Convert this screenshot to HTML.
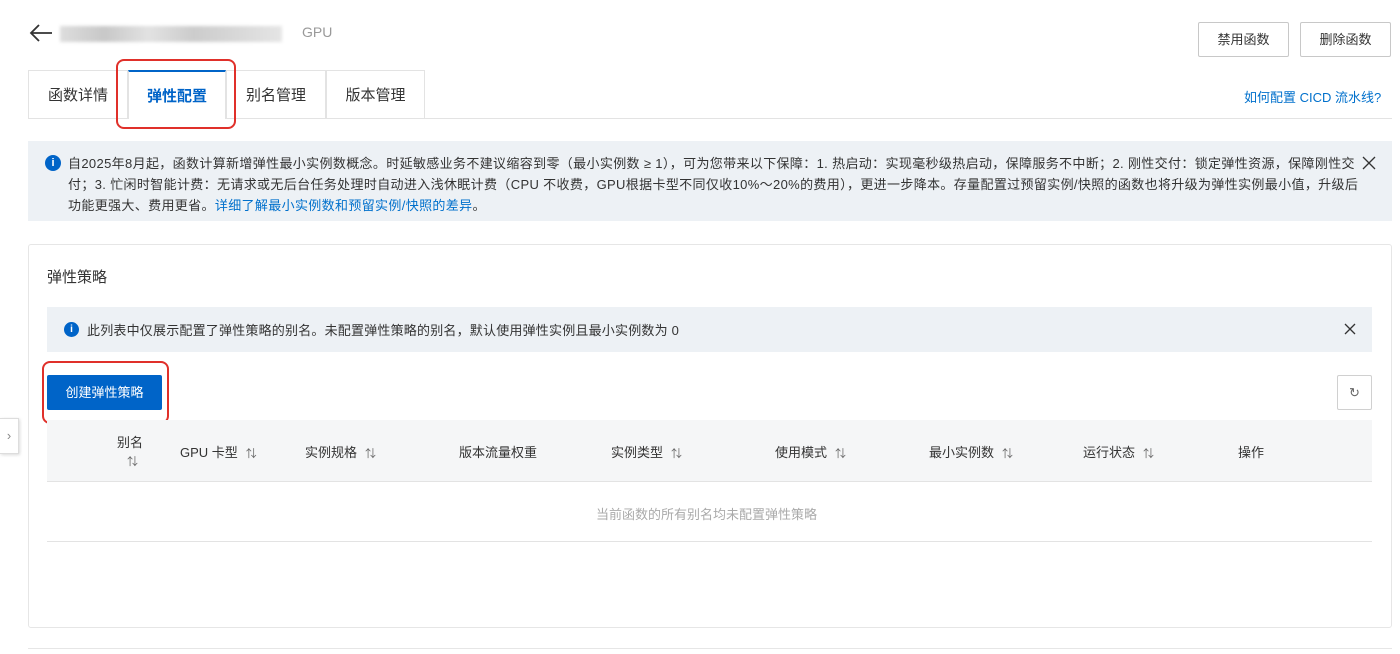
<!DOCTYPE html>
<html><head><meta charset="utf-8"><style>
*{box-sizing:border-box;margin:0;padding:0}
body{width:1400px;height:654px;overflow:hidden;background:#fff;font-family:"Liberation Sans","Noto Sans CJK SC",sans-serif;color:#333;position:relative;font-size:13px}
.a{position:absolute;white-space:nowrap}
.btn{position:absolute;border:1px solid #c8c8c8;border-radius:2px;background:#fff;font-size:13px;color:#333;text-align:center;line-height:33px}
.tab{position:absolute;top:70px;height:48px;line-height:50px;font-size:15px;color:#333;text-align:center;border:1px solid #e3e3e3;border-bottom:none;background:#fff}
.th{position:absolute;top:442px;font-size:13px;color:#333}
.s{color:#666;font-size:11px;margin-left:8px}
</style></head><body>
<svg class="a" style="left:28px;top:23px" width="26" height="20" viewBox="0 0 26 20"><path d="M24 10H3M11 2L3 10l8 8" fill="none" stroke="#333" stroke-width="1.8"/></svg>
<div class="a" style="left:60px;top:26px;width:222px;height:16px;background:linear-gradient(90deg,#ddd,#c8c8c8 20%,#e2e2e2 40%,#ccc 60%,#d8d8d8 80%,#e5e5e5);filter:blur(1.5px)"></div>
<div class="a" style="left:302px;top:24px;font-size:14px;color:#999">GPU</div>
<div class="btn" style="left:1198px;top:22px;width:91px;height:35px">禁用函数</div>
<div class="btn" style="left:1300px;top:22px;width:91px;height:35px">删除函数</div>
<div class="a" style="left:1244px;top:87px;font-size:13px;color:#0070cc">如何配置 CICD 流水线?</div>
<div class="a" style="left:28px;top:118px;width:1364px;height:1px;background:#e3e3e3"></div>
<div class="tab" style="left:28px;width:100px">函数详情</div>
<div class="tab" style="left:128px;width:98px;color:#0064c8;font-weight:bold;border-top:2px solid #0064c8;height:49px">弹性配置</div>
<div class="tab" style="left:226px;width:100px">别名管理</div>
<div class="tab" style="left:326px;width:99px">版本管理</div>
<div class="a" style="left:116px;top:59px;width:120px;height:70px;border:2px solid #e0302a;border-radius:8px"></div>
<div class="a" style="left:28px;top:141px;width:1364px;height:80px;background:#edf1f5"></div>
<div class="a" style="left:45px;top:155px;width:16px;height:16px;border-radius:50%;background:#0064c8;color:#fff;font-size:11px;font-weight:bold;text-align:center;line-height:16px">i</div>
<div class="a" style="left:68px;top:153px;width:1296px;white-space:normal;font-size:13px;line-height:21px;color:#333;letter-spacing:0.35px">自2025年8月起，函数计算新增弹性最小实例数概念。时延敏感业务不建议缩容到零（最小实例数 ≥ 1），可为您带来以下保障：1. 热启动：实现毫秒级热启动，保障服务不中断；2. 刚性交付：锁定弹性资源，保障刚性交付；3. 忙闲时智能计费：无请求或无后台任务处理时自动进入浅休眠计费（CPU 不收费，GPU根据卡型不同仅收10%～20%的费用），更进一步降本。存量配置过预留实例/快照的函数也将升级为弹性实例最小值，升级后功能更强大、费用更省。<span style="color:#0070cc">详细了解最小实例数和预留实例/快照的差异</span>。</div>
<svg class="a" style="left:1362px;top:156px" width="14" height="14"><path d="M1 1L13 13M13 1L1 13" stroke="#333" stroke-width="1.3"/></svg>
<div class="a" style="left:28px;top:244px;width:1364px;height:384px;border:1px solid #e6e6e6;border-radius:3px"></div>
<div class="a" style="left:47px;top:266px;font-size:15px;color:#333">弹性策略</div>
<div class="a" style="left:47px;top:307px;width:1325px;height:45px;background:#edf1f5"></div>
<div class="a" style="left:64px;top:322px;width:15px;height:15px;border-radius:50%;background:#0064c8;color:#fff;font-size:10px;font-weight:bold;text-align:center;line-height:15px">i</div>
<div class="a" style="left:87px;top:320px;font-size:13px;letter-spacing:0.2px">此列表中仅展示配置了弹性策略的别名。未配置弹性策略的别名，默认使用弹性实例且最小实例数为 0</div>
<svg class="a" style="left:1344px;top:323px" width="12" height="12"><path d="M1 1L11 11M11 1L1 11" stroke="#333" stroke-width="1.3"/></svg>
<div class="a" style="left:47px;top:375px;width:115px;height:35px;background:#0064c8;color:#fff;border-radius:2px;text-align:center;line-height:35px;font-size:13px">创建弹性策略</div>
<div class="a" style="left:42px;top:361px;width:127px;height:63px;border:2px solid #e0302a;border-radius:8px"></div>
<div class="a" style="left:1337px;top:375px;width:35px;height:35px;border:1px solid #d0d0d0;border-radius:2px;text-align:center;line-height:33px;color:#666;font-size:13px">↻</div>
<div class="a" style="left:47px;top:420px;width:1325px;height:62px;background:#f5f6f7;border-bottom:1px solid #e3e3e3"></div>
<div class="a" style="left:117px;top:432px;font-size:13px">别名</div><div class="a" style="left:127px;top:453px;font-size:11px;color:#666">⇅</div>
<div class="th" style="left:180px">GPU 卡型<span class="s">⇅</span></div>
<div class="th" style="left:305px">实例规格<span class="s">⇅</span></div>
<div class="th" style="left:459px">版本流量权重</div>
<div class="th" style="left:611px">实例类型<span class="s">⇅</span></div>
<div class="th" style="left:775px">使用模式<span class="s">⇅</span></div>
<div class="th" style="left:929px">最小实例数<span class="s">⇅</span></div>
<div class="th" style="left:1083px">运行状态<span class="s">⇅</span></div>
<div class="th" style="left:1238px">操作</div>
<div class="a" style="left:596px;top:504px;font-size:13px;color:#aaa">当前函数的所有别名均未配置弹性策略</div>
<div class="a" style="left:47px;top:541px;width:1325px;height:1px;background:#e3e3e3"></div>
<div class="a" style="left:0;top:418px;width:19px;height:36px;border:1px solid #ddd;border-left:none;background:#fff;box-shadow:1px 1px 3px rgba(0,0,0,.15);text-align:center;line-height:34px;color:#888;font-size:13px">›</div>
<div class="a" style="left:28px;top:648px;width:1364px;height:6px;border-top:1px solid #e6e6e6"></div>
</body></html>
